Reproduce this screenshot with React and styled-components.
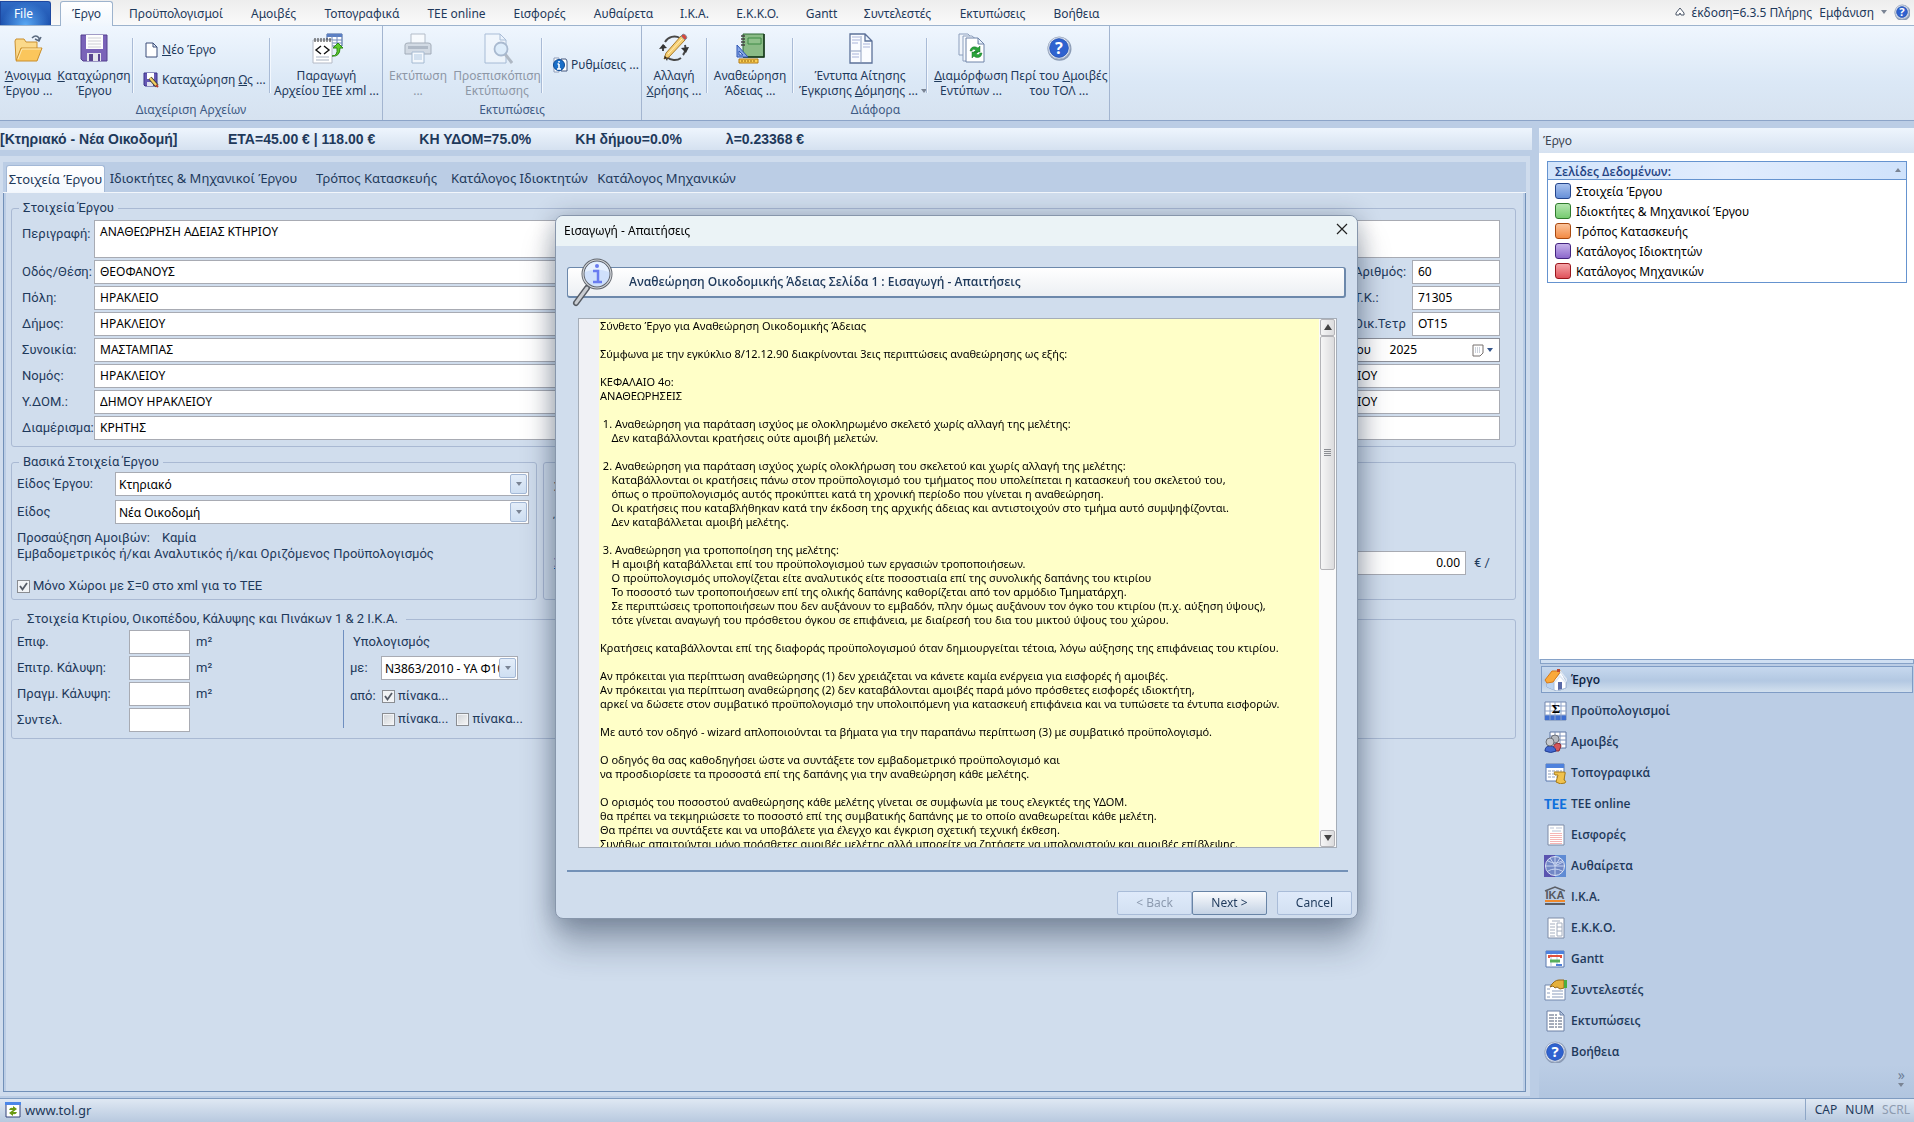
import React from "react";
import styled, { createGlobalStyle } from "styled-components";

const GlobalStyle = createGlobalStyle`
  * { box-sizing: border-box; }
  body {
    margin: 0;
    background: #bbcde5;
    color: #1e395b;
    font-family: "Noto Sans", "Open Sans", sans-serif;
    font-size: 12px;
  }
  button, input, select, textarea { font: inherit; color: inherit; margin: 0; }
  button { border: 0; background: none; padding: 0; }
  fieldset { margin: 0; min-width: 0; }
`;

const Window = styled.div`
  display: flex;
  flex-direction: column;
  min-height: 100vh;
`;

/* ---------- ribbon ---------- */

const TabBar = styled.nav`
  display: flex;
  height: 26px;
  padding-top: 1px;
  background: linear-gradient(#ededed, #fafafa);
  border-bottom: 1px solid #9db3cd;
`;

const FileButton = styled.button`
  width: 51px;
  margin-right: 9px;
  padding-right: 4px;
  color: #fff;
  border: 1px solid #1e48a0;
  border-bottom: 0;
  border-radius: 0 3px 0 0;
  background: radial-gradient(ellipse at bottom, #5aa9f5, transparent 70%), linear-gradient(#2f6ac4, #1d52ae);
`;

const RibbonTab = styled.button`
  width: ${(p) => p.$w}px;
  height: 25px;
  line-height: 22px;
  white-space: nowrap;
  ${(p) => p.$active && `
    margin-right: 2px;
    background: linear-gradient(#fff, #f0f6fd);
    border: 1px solid #9db3cd;
    border-bottom: 0;
    border-radius: 3px 3px 0 0;
  `}
`;

const TabTools = styled.div`
  display: flex;
  align-items: center;
  gap: 7px;
  margin-left: auto;
  padding: 0 4px 2px 0;
  white-space: nowrap;
`;

const Ribbon = styled.div`
  display: flex;
  height: 95px;
  background: linear-gradient(#eff6fe, #dbe8f6 60%, #d6e2f0);
  border-bottom: 1px solid #8ca4c8;
`;

const Group = styled.section`
  display: flex;
  flex-direction: column;
  width: ${(p) => p.$w}px;
  padding-top: 6px;
  border-right: 1px solid #a3b5d0;
`;

const GroupTools = styled.div`
  display: flex;
  flex: 1;
`;

const GroupName = styled.div`
  height: 18px;
  line-height: 16px;
  text-align: center;
  color: #3e5a84;
`;

const Divider = styled.i`
  width: 2px;
  height: 55px;
  margin-top: 6px;
  background: linear-gradient(90deg, #a9bbd6 50%, #f3f8fe 50%);
`;

const BigButton = styled.button`
  display: flex;
  flex-direction: column;
  align-items: center;
  width: ${(p) => p.$w}px;
  line-height: 15px;
  white-space: nowrap;
  color: ${(p) => (p.disabled ? "#8d97a6" : "#1e395b")};
  svg { margin-bottom: 4px; flex: none; opacity: ${(p) => (p.disabled ? 0.6 : 1)}; }
`;

const SmallStack = styled.div`
  display: flex;
  flex-direction: column;
  width: ${(p) => p.$w}px;
  padding: ${(p) => p.$top}px 0 0 9px;
  gap: 13px;
`;

const SmallButton = styled.button`
  display: flex;
  align-items: center;
  gap: 3px;
  height: 17px;
  white-space: nowrap;
`;

const Caret = styled.i`
  width: 0;
  height: 0;
  border: 3px solid transparent;
  border-top: 4px solid ${(p) => p.$color || "#7a8494"};
  border-bottom: 0;
  ${(p) => p.$up && "transform: rotate(180deg);"}
`;

const WithCaret = styled.span`
  display: flex;
  align-items: center;
  gap: 3px;
  margin-right: -6px;
`;

/* ---------- work area ---------- */

const Body = styled.div`
  display: flex;
  flex: 1;
  gap: 7px;
  padding-top: 7px;
`;

const Main = styled.main`
  display: flex;
  flex-direction: column;
  flex: 1;
  min-width: 0;
`;

const InfoBar = styled.div`
  display: flex;
  gap: 44px;
  height: 22px;
  font: bold 14px/22px "Liberation Sans", sans-serif;
  white-space: nowrap;
  background: linear-gradient(#eef5fd, #d5e1f0);
  span:first-child { min-width: 184px; }
`;

const Panel = styled.div`
  display: flex;
  flex-direction: column;
  flex: 1;
  margin: 6px 2px 2px 0;
  padding: 6px 4px 4px 3px;
  background: #cfdced;
`;

const PageTabs = styled.div`
  display: flex;
  height: 31px;
  padding: 3px 0 0 3px;
  background: #bbcde5;
  border-bottom: 1px solid #f2f6fb;
`;

const PageTab = styled.button`
  width: ${(p) => p.$w}px;
  height: 27px;
  padding-bottom: 1px;
  font-size: 13px;
  white-space: nowrap;
  ${(p) => p.$active && `
    background: linear-gradient(#fff, #f3f8fe);
    border: 1px solid #a3b8d6;
    border-bottom: 0;
    border-radius: 3px 3px 0 0;
  `}
`;

const Page = styled.form`
  display: flex;
  flex-direction: column;
  flex: 1;
  padding: 7px 9px 7px 7px;
  gap: 7px;
  font: 13px/16px Roboto, "Liberation Sans", sans-serif;
  background: #d0dded;
  border: 1px solid #7190b8;
  border-top: 0;
  box-shadow: inset 2px 0 #bbcde5, inset -2px 0 #bbcde5;
`;

const Fieldset = styled.fieldset`
  position: relative;
  border: 1px solid #a9b9d3;
  border-radius: 3px;
  padding: ${(p) => p.$pad};
`;

const Legend = styled.legend`
  margin-left: 2px;
  padding: 0 ${(p) => p.$gap || 4}px;
  line-height: 16px;
`;

const Columns = styled.div`
  display: flex;
  gap: 6px;
`;

const Stack = styled.div`
  display: flex;
  flex-direction: column;
  gap: ${(p) => p.$gap || 2}px;
  padding-left: ${(p) => p.$indent || 0}px;
`;

const Row = styled.div`
  display: flex;
  align-items: ${(p) => (p.$tall ? "flex-start" : "center")};
  min-height: 24px;
`;

const Label = styled.label`
  flex: none;
  width: ${(p) => (p.$w ? p.$w + "px" : "auto")};
  padding-left: ${(p) => p.$indent || 0}px;
  padding-top: ${(p) => (p.$tall ? 6 : 0)}px;
  white-space: nowrap;
`;

const Field = styled.input`
  flex: ${(p) => (p.$w ? "none" : 1)};
  width: ${(p) => (p.$w ? p.$w + "px" : "auto")};
  min-width: 0;
  height: 24px;
  padding: 0 5px 2px;
  font: 12px "Noto Sans", sans-serif;
  color: #000;
  background: #fff;
  border: 1px solid #a8abb3;
  text-align: ${(p) => p.$align || "left"};
`;

const Description = styled.textarea`
  display: block;
  flex: 1;
  height: 38px;
  padding: 3px 5px;
  font: 12px/16px "Noto Sans", sans-serif;
  color: #000;
  border: 1px solid #a8abb3;
  resize: none;
`;

const DateBox = styled.div`
  display: flex;
  align-items: center;
  gap: 3px;
  width: 200px;
  height: 24px;
  padding-right: 6px;
  background: #fff;
  border: 1px solid #8d9099;
  input { border: 0; height: 22px; }
`;

const SelectBox = styled.div`
  position: relative;
  width: ${(p) => (p.$w ? p.$w + "px" : "auto")};
  flex: ${(p) => (p.$w ? "none" : 1)};
  select {
    appearance: none;
    display: block;
    width: 100%;
    height: 24px;
    padding: 0 18px 0 3px;
    font: 12px "Noto Sans", sans-serif;
    color: #000;
    background: #fff;
    border: 1px solid #a8abb3;
    border-radius: 0;
  }
  span {
    position: absolute;
    top: 2px;
    right: 2px;
    display: flex;
    align-items: center;
    justify-content: center;
    width: 17px;
    height: 20px;
    background: linear-gradient(#e3edf9, #cfdff2);
    border: 1px solid #a3b8d6;
    border-radius: 2px;
    pointer-events: none;
  }
`;

const Check = styled.label`
  display: flex;
  align-items: center;
  gap: 3px;
  white-space: nowrap;
  input {
    appearance: none;
    width: 13px;
    height: 13px;
    border: 1px solid #8a8d92;
    outline: 1px solid #f2f4f7;
    outline-offset: -2px;
    background: linear-gradient(135deg, #cfd3d8, #f6f6f6);
  }
  input:checked {
    background: #f1f3f5 url("data:image/svg+xml,%3Csvg xmlns='http://www.w3.org/2000/svg' viewBox='0 0 11 11'%3E%3Cpath d='M2 5l2.500 3.500L9 2' fill='none' stroke='%23555b66' stroke-width='1.800'/%3E%3C/svg%3E");
  }
`;

const BasicBox = styled.div`
  width: 512px;
`;

const Notes = styled.div`
  margin: 6px 0 16px;
  white-space: nowrap;
  span { margin-right: 12px; }
`;

const CostSet = styled(Fieldset)`
  flex: 1;
  display: flex;
  flex-direction: column;
  gap: 20px;
`;

const Spacer = styled.div`
  flex: 1;
`;

const Building = styled(Fieldset)`
  margin-top: 4px;
`;

const Unit = styled.span`
  width: 22px;
  padding-left: 6px;
`;

const PlainLink = styled.a`
  color: #0a5fc4;
`;

const Calculation = styled.div`
  margin-left: 125px;
  padding-left: 6px;
  border-left: 1px solid #6f8fc0;
  height: 98px;
  display: grid;
  grid-template-columns: 31px auto;
  grid-template-rows: 24px 28px 28px 18px;
  align-items: center;
`;

const Heading = styled.span`
  grid-column: 1 / 3;
  padding-left: 3px;
`;

const CheckPair = styled.div`
  grid-column: 2;
  display: flex;
  gap: 8px;
  padding-left: 1px;
`;

/* ---------- right side ---------- */

const Side = styled.aside`
  display: flex;
  flex-direction: column;
  width: 375px;
`;

const SideTitle = styled.div`
  height: 25px;
  padding-left: 4px;
  line-height: 25px;
  color: #3c4450;
  background: linear-gradient(#eef5fd, #d5e1f0);
`;

const SideBody = styled.div`
  flex: 1;
  padding: 8px 7px 0 8px;
  background: #fff;
`;

const PagesBox = styled.section`
  padding-bottom: 1px;
  border: 1px solid #6593cf;
`;

const PagesTitle = styled.h2`
  display: flex;
  justify-content: space-between;
  margin: 0 0 1px;
  padding: 0 5px 0 7px;
  height: 18px;
  font: 600 12px/20px "Open Sans", "Noto Sans", sans-serif;
  color: #1f4283;
  background: linear-gradient(90deg, #d3e5fb, #e1ecfd 50%, #cfe2fb);
  border-bottom: 1px solid #6593cf;
  i { margin-top: 6px; }
`;

const PageLink = styled.a`
  display: flex;
  align-items: center;
  gap: 5px;
  height: 20px;
  padding-left: 7px;
  color: #000;
  text-decoration: none;
`;

const Swatch = styled.i`
  width: 16px;
  height: 16px;
  border: 1px solid ${(p) => p.$line};
  border-radius: 3px;
  background: linear-gradient(${(p) => p.$from}, ${(p) => p.$to});
`;

const Splitter = styled.div`
  height: 5px;
  margin: 0 0 2px 1px;
  background: #cfdff2;
  border: 1px solid #86a2c8;
`;

const NavList = styled.nav`
  display: flex;
  flex-direction: column;
  gap: 4px;
  padding: 0 1px 0 2px;
`;

const NavItem = styled.a`
  display: flex;
  align-items: center;
  gap: 4px;
  height: 27px;
  padding-left: 2px;
  font-family: "Open Sans", "Noto Sans", sans-serif;
  font-weight: 600;
  text-decoration: none;
  color: ${(p) => (p.$active ? "#0c2240" : "#1e395b")};
  border: 1px solid ${(p) => (p.$active ? "#7f9cc5" : "transparent")};
  background: ${(p) => (p.$active ? "linear-gradient(#c6d8ee, #b3c8e2 55%, #d2e0ee)" : "none")};
`;

const NavMore = styled.div`
  display: flex;
  flex-direction: column;
  align-items: flex-end;
  height: 33px;
  padding: 4px 9px 0 0;
  line-height: 12px;
  font-size: 14px;
  color: #6e7f98;
  background: linear-gradient(#bbcde5, #b1c5df);
  i { margin: 2px 1px 0 0; }
`;

const StatusBar = styled.footer`
  display: flex;
  align-items: center;
  height: 24px;
  padding: 0 4px 2px 5px;
  font-size: 13px;
  border-top: 1px solid #7f9bc0;
  background: linear-gradient(#dfe8f3, #b8c9df);
  a { display: flex; align-items: center; gap: 4px; color: inherit; text-decoration: none; }
`;

const Keys = styled.div`
  display: flex;
  gap: 8px;
  margin-left: auto;
  padding-left: 9px;
  height: 21px;
  font-size: 12px;
  line-height: 22px;
  border-left: 1px solid #8ea6c6;
  span:last-child { color: #8d9bb0; }
`;

/* ---------- wizard ---------- */

const Overlay = styled.div`
  position: fixed;
  inset: 0;
  display: flex;
  align-items: center;
  justify-content: center;
  padding: 11px 1px 0 0;
`;

const Dialog = styled.div`
  width: 803px;
  background: #d0dded;
  border: 1px solid #8796ab;
  border-radius: 8px;
  overflow: hidden;
  box-shadow: 0 26px 34px rgba(20, 35, 60, 0.32), 0 2px 24px rgba(20, 35, 60, 0.3);
`;

const DialogTitle = styled.header`
  display: flex;
  align-items: center;
  justify-content: space-between;
  height: 30px;
  padding: 0 9px 0 8px;
  color: #000;
  background: #ebf3f6;
`;

const Banner = styled.div`
  display: flex;
  align-items: center;
  height: 31px;
  margin: 21px 11px 20px 11px;
  font-family: "Open Sans", "Noto Sans", sans-serif;
  font-weight: 600;
  background: linear-gradient(#fff, #eceff3);
  border: 1px solid #6c88ab;
  border-width: 1px 2px 2px 1px;
  border-radius: 3px;
  svg { flex: none; margin: 0 15px 0 4px; overflow: visible; }
`;

const Reader = styled.div`
  display: flex;
  height: 530px;
  margin: 0 20px 0 22px;
  background: #f0f1f5;
  border: 1px solid #a5adb8;
  padding-left: 20px;
`;

const ReaderText = styled.textarea`
  flex: 1;
  padding: 0 1px;
  border: 0;
  resize: none;
  overflow: hidden;
  white-space: pre;
  font-size: 11px;
  line-height: 14px;
  color: #000;
  background: #ffffc8;
`;

const Scrollbar = styled.div`
  display: flex;
  flex-direction: column;
  width: 17px;
  background: #fbfbfb;
  padding: 0 1px;
`;

const ScrollArrow = styled.button`
  display: flex;
  align-items: center;
  justify-content: center;
  height: 17px;
  margin-top: ${(p) => (p.$down ? "auto" : 0)};
  background: linear-gradient(90deg, #f6f6f6, #dcdcde);
  border: 1px solid #b4b4b8;
  border-radius: 2px;
  i { border-width: 4px; border-bottom: 0; border-top: 6px solid #444; }
`;

const ScrollThumb = styled.div`
  display: flex;
  align-items: center;
  justify-content: center;
  height: 234px;
  background: linear-gradient(90deg, #f6f6f6, #dcdcde);
  border: 1px solid #b4b4b8;
  border-radius: 2px;
`;

const DialogFooter = styled.footer`
  display: flex;
  justify-content: flex-end;
  margin: 22px 9px 0 11px;
  padding: 19px 0 0;
  height: 48px;
  border-top: 2px solid #7391b7;
`;

const DialogButton = styled.button`
  width: 75px;
  height: 24px;
  margin-left: ${(p) => p.$gap || 0}px;
  margin-right: ${(p) => (p.$last ? -4 : 0)}px;
  font-size: 12px;
  color: ${(p) => (p.disabled ? "#8d9bb0" : "#1e395b")};
  border: 1px solid ${(p) => (p.$main ? "#6884a6" : "#a9bcd8")};
  border-radius: 2px;
  background: ${(p) => (p.$main ? "linear-gradient(#fbfcfe, #c4d2e4)" : "linear-gradient(#dfeafa, #d2e0f2)")};
`;

/* ---------- drawings ---------- */

const HelpMark = ({ r = 13, c = 16 }) => (
  <>
    <circle cx={c + 0.5} cy={c + 0.8} r={r - 1} fill="#8b9bb5" />
    <circle cx={c} cy={c} r={r - 2} fill="#f4f7fc" stroke="#a7b4ca" />
    <circle cx={c} cy={c} r={r - 3.5} fill="#2f62cf" stroke="#1f479f" strokeWidth=".6" />
    <text x={c} y={c + r * 0.45} fontSize={r * 1.25} fontWeight="bold" textAnchor="middle" fill="#fff" fontFamily="Noto Sans">?</text>
  </>
);

const bigIcons = {
  open: (
    <>
      <path d="M3 9l1-2h8l2 3h11v18H4z" fill="#fbd98a" stroke="#c98f2e" />
      <path d="M4 29l5-13h21l-5 13z" fill="#fbc65c" stroke="#c98f2e" />
      <path d="M6 27l4-10h19" fill="none" stroke="#fde9b4" />
      <path d="M20 6q4-4 7 0v3m2-4l-2 4-4-2" fill="none" stroke="#5b6b80" strokeWidth="1.500" />
    </>
  ),
  save: (
    <>
      <path d="M3 3h26v26H5l-2-2z" fill="#7a63b8" stroke="#54418f" />
      <path d="M8 3h17v14H8z" fill="#fdfdfd" />
      <path d="M10 6h13M10 9h13M10 12h13M10 15h13" stroke="#cfcfd6" />
      <path d="M9 21h14v8H9z" fill="#e4e4ec" />
      <path d="M11 22h4v7h-4zM20 22h2v7h-2z" fill="#58448f" />
    </>
  ),
  xml: (
    <>
      <path d="M16 2h15v12H16z" fill="#fff" stroke="#3d5c96" />
      <path d="M16 2h15v3H16z" fill="#5a7fc4" />
      <path d="M16 8h15M16 11h15M21 3v11M26 3v11" stroke="#6c86b8" />
      <path d="M2 8h19v23H2z" fill="#fff" stroke="#b4bac6" />
      <path d="M4 6v4M7 6v4M10 6v4M13 6v4M16 6v4M19 6v4" stroke="#333" />
      <path d="M10 14l-5 4 5 4M13 14l5 4-5 4" fill="none" stroke="#111" strokeWidth="1.400" />
      <path d="M5 25h13M5 28h13" stroke="#a9b3c2" />
      <path d="M21 24q6 0 5-8h-4l5-5 5 5h-3q0 9-8 8z" fill="#5fcb2c" stroke="#2c8a14" />
    </>
  ),
  print: (
    <>
      <path d="M9 2h14v12H9z" fill="#fff" stroke="#8f99a6" />
      <path d="M3 13q0-2 3-2h20q3 0 3 2v9H3z" fill="#c5ccd5" stroke="#77818f" />
      <path d="M6 14h20v3H6z" fill="#8c96a5" />
      <path d="M10 20h12v11H10z" fill="#fff" stroke="#7d98b8" />
      <path d="M12 23h8M12 25h8M12 27h8" stroke="#8fb0d4" />
    </>
  ),
  preview: (
    <>
      <path d="M4 2h15l6 6v23H4z M19 2v6h6" fill="#f4f8fd" stroke="#7f9abf" />
      <path d="M24 22l7 9" stroke="#8e96a2" strokeWidth="3" />
      <circle cx="20" cy="17" r="6.500" fill="#d8ebfb" stroke="#8096b4" strokeWidth="1.800" />
    </>
  ),
  change: (
    <>
      <path d="M7 10a11 11 0 0 1 15-4M27 13a11 11 0 0 1-2 10M23 26a11 11 0 0 1-14-1M5 19a11 11 0 0 1 1-6" fill="none" stroke="#484848" strokeWidth="2" />
      <path d="M1 17l4-5 4 4zM31 15l-3 6-5-5zM11 23l-2 6-3-5z" fill="#333" />
      <path d="M6 27l2-6L23 4l4 4-16 17z" fill="#f6cf74" stroke="#a87b2c" />
      <path d="M10 22L24 7" stroke="#fff0bd" />
      <path d="M23 4l2-2q3 0 4 4l-2 2z" fill="#d6483e" stroke="#8c8c96" />
      <path d="M6 27l1-3 2 2z" fill="#222" />
    </>
  ),
  review: (
    <>
      <path d="M9 2h21v23H9z" fill="#8abb86" stroke="#2f6b35" />
      <path d="M30 2v23H9" fill="none" stroke="#16361b" strokeWidth="1.500" />
      <path d="M14 6h13v6H14z" fill="#8fc08b" stroke="#3c8a44" />
      <path d="M7 4h4M7 7h4M7 10h4M7 13h4" stroke="#444" strokeWidth="1.500" />
      <path d="M3 13l11 12H3z" fill="#86a7e6" stroke="#2c55b4" />
      <path d="M5 19l4 4H5z" fill="#dce8fc" stroke="#2c55b4" />
      <path d="M5 27h19v4H5z" fill="#fbcf55" stroke="#b47a12" />
      <path d="M8 28v2M11 28v2M14 28v2M17 28v2M20 28v2" stroke="#94620a" />
    </>
  ),
  forms: (
    <>
      <path d="M6 2h15l7 7v22H6z M21 2v7h7" fill="#fafcff" stroke="#5c7199" strokeWidth="1.300" />
      <path d="M17 4v26M7 19h10" stroke="#8e9fc0" />
      <path d="M8 5h8M8 8h8M8 11h6M8 22h7M8 25h7M19 12h7M19 15h7" stroke="#a9b4da" />
    </>
  ),
  layouts: (
    <>
      <path d="M4 2h9l5 5v16H4z" fill="#f1f5fb" stroke="#8c9fbd" />
      <path d="M8 4h9l6 5v20H8z" fill="#f5f8fd" stroke="#8c9fbd" />
      <path d="M11 6h12l6 6v18H11z M23 6v6h6" fill="#fff" stroke="#6f84a8" />
      <path d="M15 19q1-5 6-4l2 1 2-2v6h-6l2-2q-4-2-4 1zM27 21q-1 6-7 4l-1-1-2 2v-6h6l-2 2q3 2 4-1z" fill="#2aa53b" stroke="#14742a" strokeWidth=".5" />
    </>
  ),
  about: <HelpMark />,
};

const smallIcons = {
  page: <path d="M3 1h7l4 4v10H3z M10 1v4h4" fill="#fff" stroke="#3a4d78" />,
  saveAs: (
    <>
      <path d="M1 1h13v13H2l-1-1z" fill="#6558b4" stroke="#3b3288" />
      <path d="M4 1h7v6H4z" fill="#fff" />
      <path d="M4 10h6v4H4z" fill="#dfe0ee" />
      <path d="M7 6l7 8" stroke="#3d3a30" strokeWidth="4" />
      <path d="M7 6l7 8" stroke="#f1cf62" strokeWidth="2.400" />
      <path d="M13 13l2 2" stroke="#b73a2c" strokeWidth="2" />
    </>
  ),
  info: (
    <>
      <path d="M2 1h5v14H2z" fill="#fff" stroke="#8c9bb8" />
      <path d="M9 2h5l1 2v10H9z" fill="#fff" stroke="#44597f" />
      <circle cx="7" cy="8" r="5.500" fill="#1a6fc8" stroke="#0e4a94" />
      <path d="M7 7v5M5.500 7H7M5 12h4M7 4v1.600" stroke="#fff" strokeWidth="1.600" />
    </>
  ),
  site: (
    <>
      <path d="M1 1h14v14H1z" fill="#fff" stroke="#33437a" />
      <path d="M0 0h16v3H0z" fill="#4b86e8" />
      <path d="M4 8q1-3 4-2V4l4 3-4 3V8H4zM12 10q-1 3-4 2v2l-4-3 4-3v2h4z" fill="#6a9a12" />
    </>
  ),
};

const navIcons = {
  home: (
    <>
      <path d="M3 12l10-8 9 9v6l-9 3-10-4z" fill="#e4eefa" stroke="#8aa4c8" />
      <path d="M3 12v6l7 3V11z" fill="#bcd3ef" />
      <path d="M10 11l7-8 5 9v7l-9 3-3-1z" fill="#fff" stroke="#a9bdd8" />
      <path d="M1 11L8 2l9 0-8 11-6 1z" fill="#fba93a" stroke="#d77a16" />
      <path d="M16 2l7 9-2 2-5-6-5 6" fill="none" stroke="#dfe8f4" strokeWidth="1.500" />
      <path d="M14 13h4v7l-4 1z" fill="#5a6ba8" />
      <path d="M13 0h3v3h-3z" fill="#c24a2e" />
    </>
  ),
  sum: (
    <>
      <path d="M1 2h21v18H1z" fill="#fff" stroke="#7085ad" />
      <path d="M1 15h21v5H1z" fill="#3f6fd0" />
      <path d="M6 2v18M11 2v18M17 2v18M1 6h21M1 11h21M1 15h21" stroke="#8fa3c9" />
      <text x="12" y="13" fontSize="13" fontWeight="bold" textAnchor="middle" fill="#000" fontFamily="Liberation Serif">Σ</text>
    </>
  ),
  people: (
    <>
      <path d="M6 1h16v16H6z" fill="#fff" stroke="#5f77a2" />
      <path d="M11 1v15M16 1v15M6 5h16M6 9h16M6 13h16" stroke="#7c92ba" />
      <path d="M9 20q0-7 4-8 4 0 4 3l-2 5z" fill="#d4575a" stroke="#8f2b30" />
      <circle cx="11" cy="8" r="4" fill="#b5b9bf" stroke="#6b6f76" />
      <path d="M1 20q0-5 5-5t6 5q-5 3-11 0z" fill="#4468cf" stroke="#223f94" />
      <circle cx="6" cy="11" r="4" fill="#c6c9ce" stroke="#6b6f76" />
    </>
  ),
  topo: (
    <>
      <path d="M2 2h18v17H2z" fill="#fff" stroke="#5b78ae" />
      <path d="M2 2h18v4H2z" fill="#4e81dc" />
      <path d="M4 9h14M4 12h14M4 15h10" stroke="#8b9dbd" strokeDasharray="3 1" />
      <path d="M12 10q-3-1-1 3l3 0-2 7q4 3 9 1 2-2-1-3l1-6q1-2-1-2z" fill="#f0c24e" stroke="#a67a18" />
    </>
  ),
  tee: <text x="0" y="16" fontSize="13" fontWeight="900" fill="#0f6fdc" fontFamily="Lato">TEE</text>,
  fees: (
    <>
      <path d="M4 1h16v20H4z" fill="#fff" stroke="#7d8ba6" />
      <path d="M6 4h4M12 4h6M8 7h9" stroke="#b9c3d6" />
      <path d="M6 9.500h12M6 11.500h12M6 13.500h12M6 15.500h12M6 17.500h12M6 19.500h12" stroke="#f5b5b5" />
    </>
  ),
  globe: (
    <>
      <path d="M0 0h22v22H0z" fill="#5f8bd4" />
      <path d="M0 0h11v22H0z" fill="#5a54b0" />
      <circle cx="11" cy="11" r="9.500" fill="#7288c6" stroke="#dfe6f5" />
      <path d="M11 2v18M2 11h18M4 6q7 4 14 0M4 16q7-4 14 0M11 11L6 3M11 11l5-8M11 11l8-4" fill="none" stroke="#c9d5f0" />
    </>
  ),
  ika: (
    <>
      <path d="M1 5L11 1l10 4" fill="none" stroke="#5c5f66" strokeWidth="1.500" />
      <text x="11" y="13" fontSize="11" fontWeight="bold" textAnchor="middle" fill="#55585e" fontFamily="Liberation Sans">IKA</text>
      <path d="M1 15h20" stroke="#f08a2c" strokeWidth="2" />
      <path d="M1 18h20" stroke="#5c5f66" strokeWidth="2" />
    </>
  ),
  ekko: (
    <>
      <path d="M4 1h16v20H4z" fill="#fff" stroke="#7d8ba6" />
      <path d="M8 4h8M6 7h5M6 10h5M6 13h5M6 16h5M6 19h5M13 6h5v13h-5zM13 10h5M13 14h5" fill="none" stroke="#a4aebf" />
    </>
  ),
  gantt: (
    <>
      <path d="M2 3h18v16H2z" fill="#fff" stroke="#5b78ae" />
      <path d="M2 3h18v3H2z" fill="#4e81dc" />
      <path d="M7 6v13M13 6v13" stroke="#b9c6dd" />
      <path d="M5 10V8h12v2" fill="none" stroke="#e0513d" strokeWidth="2" />
      <path d="M6 13h10" stroke="#58b05c" strokeWidth="3" />
      <path d="M12 17h6" stroke="#4f7ed6" strokeWidth="2" />
    </>
  ),
  rates: (
    <>
      <path d="M1 6h20v15H1z" fill="#fff" stroke="#7388ad" />
      <path d="M3 10h3M3 14h3M3 18h3M8 12h11M8 15h11M8 18h11" stroke="#8b9dbd" />
      <path d="M6 8q4-7 9-7h5v8l-4 1-3-2-2 1-2-2z" fill="#e5b13a" stroke="#94691a" />
      <path d="M20 1h3v8h-3z" fill="#4cae3f" />
    </>
  ),
  prints: (
    <>
      <path d="M3 1h13l4 4v16H3z M16 1v4h4" fill="#fff" stroke="#6d80a5" />
      <path d="M5 5h8M5 8h13M5 11h13M5 14h13M5 17h13" stroke="#4d5b76" strokeDasharray="5 1 2 1" />
    </>
  ),
  help: <HelpMark r={12} c={11} />,
};

const Big = ({ name }) => <svg width="32" height="32" viewBox="0 0 32 32" aria-hidden="true">{bigIcons[name]}</svg>;
const Small = ({ name }) => <svg width="16" height="16" viewBox="0 0 16 16" aria-hidden="true">{smallIcons[name]}</svg>;
const Nav = ({ name }) => <svg width="23" height="22" viewBox="0 0 23 22" aria-hidden="true">{navIcons[name]}</svg>;

/* ---------- data ---------- */

const ribbonTabs = [
  ["Προϋπολογισμοί", 122], ["Αμοιβές", 73], ["Τοπογραφικά", 104], ["TEE online", 85],
  ["Εισφορές", 81], ["Αυθαίρετα", 87], ["Ι.Κ.Α.", 55], ["Ε.Κ.Κ.Ο.", 71], ["Gantt", 57],
  ["Συντελεστές", 95], ["Εκτυπώσεις", 95], ["Βοήθεια", 73],
];

const pageTabs = [
  ["Στοιχεία Έργου", 99], ["Ιδιοκτήτες & Μηχανικοί Έργου", 197], ["Τρόπος Κατασκευής", 149],
  ["Κατάλογος Ιδιοκτητών", 131], ["Κατάλογος Μηχανικών", 169],
];

const dataPages = [
  ["Στοιχεία Έργου", "#24458c", "#a9c2ee", "#6790d8"],
  ["Ιδιοκτήτες & Μηχανικοί Έργου", "#2f7a2c", "#b5e6b0", "#76cb70"],
  ["Τρόπος Κατασκευής", "#a8480f", "#fbc49c", "#f38a44"],
  ["Κατάλογος Ιδιοκτητών", "#43237f", "#c6b2ea", "#8c68cc"],
  ["Κατάλογος Μηχανικών", "#99161c", "#f5a5a8", "#e0525a"],
];

const navItems = [
  ["Έργο", "home"], ["Προϋπολογισμοί", "sum"], ["Αμοιβές", "people"], ["Τοπογραφικά", "topo"],
  ["TEE online", "tee"], ["Εισφορές", "fees"], ["Αυθαίρετα", "globe"], ["Ι.Κ.Α.", "ika"],
  ["Ε.Κ.Κ.Ο.", "ekko"], ["Gantt", "gantt"], ["Συντελεστές", "rates"], ["Εκτυπώσεις", "prints"],
  ["Βοήθεια", "help"],
];

const guide = `Σύνθετο Έργο για Αναθεώρηση Οικοδομικής Άδειας

Σύμφωνα με την εγκύκλιο 8/12.12.90 διακρίνονται 3εις περιπτώσεις αναθεώρησης ως εξής:

ΚΕΦΑΛΑΙΟ 4ο:
ΑΝΑΘΕΩΡΗΣΕΙΣ

 1. Αναθεώρηση για παράταση ισχύος με ολοκληρωμένο σκελετό χωρίς αλλαγή της μελέτης:
    Δεν καταβάλλονται κρατήσεις ούτε αμοιβή μελετών.

 2. Αναθεώρηση για παράταση ισχύος χωρίς ολοκλήρωση του σκελετού και χωρίς αλλαγή της μελέτης:
    Καταβάλλονται οι κρατήσεις πάνω στον προϋπολογισμό του τμήματος που υπολείπεται η κατασκευή του σκελετού του,
    όπως ο προϋπολογισμός αυτός προκύπτει κατά τη χρονική περίοδο που γίνεται η αναθεώρηση.
    Οι κρατήσεις που καταβλήθηκαν κατά την έκδοση της αρχικής άδειας και αντιστοιχούν στο τμήμα αυτό συμψηφίζονται.
    Δεν καταβάλλεται αμοιβή μελέτης.

 3. Αναθεώρηση για τροποποίηση της μελέτης:
    Η αμοιβή καταβάλλεται επί του προϋπολογισμού των εργασιών τροποποιήσεων.
    Ο προϋπολογισμός υπολογίζεται είτε αναλυτικός είτε ποσοστιαία επί της συνολικής δαπάνης του κτιρίου
    Το ποσοστό των τροποποιήσεων επί της ολικής δαπάνης καθορίζεται από τον αρμόδιο Τμηματάρχη.
    Σε περιπτώσεις τροποποιήσεων που δεν αυξάνουν το εμβαδόν, πλην όμως αυξάνουν τον όγκο του κτιρίου (π.χ. αύξηση ύψους),
    τότε γίνεται αναγωγή του πρόσθετου όγκου σε επιφάνεια, με διαίρεσή του δια του μικτού ύψους του χώρου.

Κρατήσεις καταβάλλονται επί της διαφοράς προϋπολογισμού όταν δημιουργείται τέτοια, λόγω αύξησης της επιφάνειας του κτιρίου.

Αν πρόκειται για περίπτωση αναθεώρησης (1) δεν χρειάζεται να κάνετε καμία ενέργεια για εισφορές ή αμοιβές.
Αν πρόκειται για περίπτωση αναθεώρησης (2) δεν καταβάλονται αμοιβές παρά μόνο πρόσθετες εισφορές ιδιοκτήτη,
αρκεί να δώσετε στον συμβατικό προϋπολογισμό την υπολοιπόμενη για κατασκευή επιφάνεια και να τυπώσετε τα έντυπα εισφορών.

Με αυτό τον οδηγό - wizard απλοποιούνται τα βήματα για την παραπάνω περίπτωση (3) με συμβατικό προϋπολογισμό.

Ο οδηγός θα σας καθοδηγήσει ώστε να συντάξετε τον εμβαδομετρικό προϋπολογισμό και
να προσδιορίσετε τα προσοστά επί της δαπάνης για την αναθεώρηση κάθε μελέτης.

Ο ορισμός του ποσοστού αναθεώρησης κάθε μελέτης γίνεται σε συμφωνία με τους ελεγκτές της ΥΔΟΜ.
θα πρέπει να τεκμηριώσετε το ποσοστό επί της συμβατικής δαπάνης με το οποίο αναθεωρείται κάθε μελέτη.
Θα πρέπει να συντάξετε και να υποβάλετε για έλεγχο και έγκριση σχετική τεχνική έκθεση.
Συνήθως απαιτούνται μόνο πρόσθετες αμοιβές μελέτης αλλά μπορείτε να ζητήσετε να υπολογιστούν και αμοιβές επίβλεψης.`;

/* ---------- parts ---------- */

function RibbonArea() {
  return (
    <>
      <TabBar>
        <FileButton>File</FileButton>
        <RibbonTab $w={53} $active>Έργο</RibbonTab>
        {ribbonTabs.map(([name, w]) => (
          <RibbonTab key={name} $w={w}>{name}</RibbonTab>
        ))}
        <TabTools>
          <svg width="10" height="10" viewBox="0 0 10 10" aria-hidden="true">
            <path d="M1 6l4-5 4 5v2H6L5 6 4 8H1z" fill="#fff" stroke="#4b5668" />
          </svg>
          <span>έκδοση=6.3.5 Πλήρης</span>
          <span>Εμφάνιση</span>
          <Caret />
          <svg width="16" height="16" viewBox="0 0 16 16" aria-hidden="true"><HelpMark r={9} c={8} /></svg>
        </TabTools>
      </TabBar>
      <Ribbon>
        <Group $w={383}>
          <GroupTools>
            <BigButton $w={56}><Big name="open" /><span><u>Ά</u>νοιγμα</span><span>Έργου ...</span></BigButton>
            <BigButton $w={76}><Big name="save" /><span><u>Κ</u>αταχώρηση</span><span>Έργου</span></BigButton>
            <Divider />
            <SmallStack $w={135} $top={9}>
              <SmallButton><Small name="page" /><span><u>Ν</u>έο Έργο</span></SmallButton>
              <SmallButton><Small name="saveAs" /><span>Καταχώρηση <u>Ω</u>ς ...</span></SmallButton>
            </SmallStack>
            <Divider />
            <BigButton $w={111}><Big name="xml" /><span>Παραγωγή</span><span>Αρχείου <u>T</u>EE xml ...</span></BigButton>
          </GroupTools>
          <GroupName>Διαχείριση Αρχείων</GroupName>
        </Group>
        <Group $w={259}>
          <GroupTools>
            <BigButton $w={70} disabled><Big name="print" /><span>Εκτύπωση</span><span>...</span></BigButton>
            <BigButton $w={88} disabled><Big name="preview" /><span>Προεπισκόπιση</span><span>Εκτύπωσης</span></BigButton>
            <Divider />
            <SmallStack $w={98} $top={24}>
              <SmallButton><Small name="info" /><span>Ρυθμίσεις ...</span></SmallButton>
            </SmallStack>
          </GroupTools>
          <GroupName>Εκτυπώσεις</GroupName>
        </Group>
        <Group $w={468}>
          <GroupTools>
            <BigButton $w={64}><Big name="change" /><span>Αλλαγή</span><span><u>Χ</u>ρήσης ...</span></BigButton>
            <Divider />
            <BigButton $w={84}><Big name="review" /><span>Αναθεώρηση</span><span>Άδειας ...</span></BigButton>
            <Divider />
            <BigButton $w={132}>
              <Big name="forms" />
              <span>Έντυπα Αίτησης</span>
              <WithCaret><span>Έγκρισης <u>Δ</u>όμησης ...</span><Caret /></WithCaret>
            </BigButton>
            <Divider />
            <BigButton $w={86}><Big name="layouts" /><span><u>Δ</u>ιαμόρφωση</span><span>Εντύπων ...</span></BigButton>
            <BigButton $w={90}><Big name="about" /><span>Περί του <u>Α</u>μοιβές</span><span>του ΤΟΛ ...</span></BigButton>
          </GroupTools>
          <GroupName>Διάφορα</GroupName>
        </Group>
      </Ribbon>
    </>
  );
}

function TextRow({ id, label, value, children }) {
  return (
    <Row>
      <Label $w={72} htmlFor={id}>{label}</Label>
      <Field id={id} defaultValue={value} />
      {children}
    </Row>
  );
}

function SideField({ id, label, value }) {
  return (
    <>
      <Label $w={72} $indent={14} htmlFor={id}>{label}</Label>
      <Field id={id} $w={88} defaultValue={value} />
    </>
  );
}

function Choice({ id, w, value }) {
  return (
    <SelectBox $w={w}>
      <select id={id}><option>{value}</option></select>
      <span><Caret /></span>
    </SelectBox>
  );
}

function ProjectForm() {
  return (
    <Page>
      <Fieldset $pad="4px 15px 6px 5px">
        <Legend>Στοιχεία Έργου</Legend>
        <Stack $indent={5}>
          <Row $tall>
            <Label $w={72} $tall htmlFor="descr">Περιγραφή:</Label>
            <Description id="descr" defaultValue="ΑΝΑΘΕΩΡΗΣΗ ΑΔΕΙΑΣ ΚΤΗΡΙΟΥ" />
          </Row>
          <TextRow id="street" label="Οδός/Θέση:" value="ΘΕΟΦΑΝΟΥΣ"><SideField id="num" label="Αριθμός:" value="60" /></TextRow>
          <TextRow id="city" label="Πόλη:" value="ΗΡΑΚΛΕΙΟ"><SideField id="zip" label="Τ.Κ.:" value="71305" /></TextRow>
          <TextRow id="town" label="Δήμος:" value="ΗΡΑΚΛΕΙΟΥ"><SideField id="block" label="Οικ.Τετρ" value="ΟΤ15" /></TextRow>
          <TextRow id="area" label="Συνοικία:" value="ΜΑΣΤΑΜΠΑΣ">
            <Label $w={80} htmlFor="date" />
            <DateBox>
              <Field id="date" defaultValue={"Ιανουαρίου\u00a0\u00a0\u00a0\u00a0\u00a0\u00a02025"} />
              <svg width="12" height="13" viewBox="0 0 12 13" aria-hidden="true">
                <path d="M1 1h10v8l-3 3H1z" fill="#fff" stroke="#77706e" />
                <path d="M3 4h6M3 6h6M3 8h6" stroke="#9aa6ba" strokeDasharray="1 1" />
              </svg>
              <Caret $color="#34558b" />
            </DateBox>
          </TextRow>
          <TextRow id="county" label="Νομός:" value="ΗΡΑΚΛΕΙΟΥ">
            <Label $w={80} htmlFor="county2" />
            <Field id="county2" $w={194} defaultValue="ΗΡΑΚΛΕΙΟΥ" />
          </TextRow>
          <TextRow id="ydom" label="Υ.ΔΟΜ.:" value="ΔΗΜΟΥ ΗΡΑΚΛΕΙΟΥ">
            <Label $w={80} htmlFor="ydom2" />
            <Field id="ydom2" $w={194} defaultValue="ΗΡΑΚΛΕΙΟΥ" />
          </TextRow>
          <TextRow id="flat" label="Διαμέρισμα:" value="ΚΡΗΤΗΣ" />
        </Stack>
      </Fieldset>

      <Columns>
        <Fieldset $pad="2px 7px 5px 5px">
          <Legend>Βασικά Στοιχεία Έργου</Legend>
          <BasicBox>
            <Stack $gap={4}>
              <Row><Label $w={98} htmlFor="kind">Είδος Έργου:</Label><Choice id="kind" value="Κτηριακό" /></Row>
              <Row><Label $w={98} htmlFor="type">Είδος</Label><Choice id="type" value="Νέα Οικοδομή" /></Row>
            </Stack>
            <Notes>
              <div><span>Προσαύξηση Αμοιβών:</span><span>Καμία</span></div>
              <div>Εμβαδομετρικός ή/και Αναλυτικός ή/και Οριζόμενος Προϋπολογισμός</div>
            </Notes>
            <Check><input type="checkbox" defaultChecked />Μόνο Χώροι με Σ=0 στο xml για το ΤΕΕ</Check>
          </BasicBox>
        </Fieldset>
        <CostSet $pad="9px 19px 4px 10px">
          <Legend>Συντελεστές</Legend>
          <span>Συντελεστές Έργου</span>
          <span>Έργο</span>
          <Row>
            <PlainLink href="#rates">Συντελεστής</PlainLink>
            <Spacer />
            <Field id="cost" aria-label="Κόστος" $w={140} $align="right" defaultValue="0.00" />
            <Label $w={30} $indent={8} htmlFor="cost">€ /</Label>
          </Row>
        </CostSet>
      </Columns>

      <Building $pad="3px 6px 6px 5px">
        <Legend $gap={8}>Στοιχεία Κτιρίου, Οικοπέδου, Κάλυψης και Πινάκων 1 &amp; 2 Ι.Κ.Α.</Legend>
        <Columns>
          <Stack>
            {[["Επιφ.", "m²"], ["Επιτρ. Κάλυψη:", "m²"], ["Πραγμ. Κάλυψη:", "m²"], ["Συντελ.", ""]].map(([name, unit]) => (
              <Row key={name}>
                <Label $w={112} htmlFor={name}>{name}</Label>
                <Field id={name} $w={61} />
                <Unit>{unit}</Unit>
              </Row>
            ))}
          </Stack>
          <Calculation>
            <Heading>Υπολογισμός</Heading>
            <Label htmlFor="law">με:</Label>
            <Choice id="law" w={137} value="Ν3863/2010 - ΥΑ Φ10" />
            <span>από:</span>
            <CheckPair><Check><input type="checkbox" defaultChecked />πίνακα...</Check></CheckPair>
            <CheckPair>
              <Check><input type="checkbox" />πίνακα...</Check>
              <Check><input type="checkbox" />πίνακα...</Check>
            </CheckPair>
          </Calculation>
        </Columns>
      </Building>
    </Page>
  );
}

function SidePanel() {
  return (
    <Side>
      <SideTitle>Έργο</SideTitle>
      <SideBody>
        <PagesBox>
          <PagesTitle>Σελίδες Δεδομένων:<Caret $up /></PagesTitle>
          {dataPages.map(([name, line, from, to]) => (
            <PageLink key={name} href="#page">
              <Swatch $line={line} $from={from} $to={to} />
              {name}
            </PageLink>
          ))}
        </PagesBox>
      </SideBody>
      <Splitter />
      <NavList>
        {navItems.map(([name, icon], i) => (
          <NavItem key={name} href="#nav" $active={i === 0}>
            <Nav name={icon} />
            {name}
          </NavItem>
        ))}
      </NavList>
      <NavMore>»<Caret /></NavMore>
    </Side>
  );
}

function Wizard() {
  return (
    <Overlay>
      <Dialog role="dialog" aria-label="Εισαγωγή - Απαιτήσεις">
        <DialogTitle>
          <span>Εισαγωγή - Απαιτήσεις</span>
          <button aria-label="Close">
            <svg width="12" height="12" viewBox="0 0 12 12" aria-hidden="true">
              <path d="M1 1l10 10M11 1L1 11" stroke="#222" strokeWidth="1.200" />
            </svg>
          </button>
        </DialogTitle>
        <Banner>
          <svg width="42" height="48" viewBox="0 0 42 48" aria-hidden="true">
            <path d="M15 30L4 45" stroke="#555a62" strokeWidth="6" strokeLinecap="round" />
            <path d="M15 30L4 45" stroke="#c9ccd1" strokeWidth="3" strokeLinecap="round" />
            <circle cx="25" cy="16" r="14" fill="#cfe0fb" stroke="#5f646c" strokeWidth="3" />
            <circle cx="25" cy="16" r="14" fill="none" stroke="#d6d9dd" strokeWidth="1.200" />
            <path d="M13 14q12-5 24 0-2-10-12-10t-12 10z" fill="#e6f0fe" />
            <circle cx="25" cy="8" r="2" fill="#6a7cf0" />
            <path d="M21 13h5v11M21 24h9" fill="none" stroke="#6a7cf0" strokeWidth="2.500" />
          </svg>
          Αναθεώρηση Οικοδομικής Άδειας Σελίδα 1 : Εισαγωγή - Απαιτήσεις
        </Banner>
        <Reader>
          <ReaderText readOnly aria-label="Οδηγίες" defaultValue={guide} />
          <Scrollbar>
            <ScrollArrow aria-label="Up"><Caret $up /></ScrollArrow>
            <ScrollThumb>
              <svg width="7" height="8" viewBox="0 0 7 8" aria-hidden="true">
                <path d="M0 .5h7M0 2.500h7M0 4.500h7M0 6.500h7" stroke="#8b8d92" />
              </svg>
            </ScrollThumb>
            <ScrollArrow $down aria-label="Down"><Caret /></ScrollArrow>
          </Scrollbar>
        </Reader>
        <DialogFooter>
          <DialogButton disabled>&lt; Back</DialogButton>
          <DialogButton $main>Next &gt;</DialogButton>
          <DialogButton $gap={10} $last>Cancel</DialogButton>
        </DialogFooter>
      </Dialog>
    </Overlay>
  );
}

export default function App() {
  return (
    <Window>
      <GlobalStyle />
      <RibbonArea />
      <Body>
        <Main>
          <InfoBar>
            <span>[Κτηριακό - Νέα Οικοδομή]</span>
            <span>ΕΤΑ=45.00 € | 118.00 €</span>
            <span>ΚΗ ΥΔΟΜ=75.0%</span>
            <span>ΚΗ δήμου=0.0%</span>
            <span>λ=0.23368 €</span>
          </InfoBar>
          <Panel>
            <PageTabs>
              {pageTabs.map(([name, w], i) => (
                <PageTab key={name} type="button" $w={w} $active={i === 0}>{name}</PageTab>
              ))}
            </PageTabs>
            <ProjectForm />
          </Panel>
        </Main>
        <SidePanel />
      </Body>
      <StatusBar>
        <a href="#site"><Small name="site" />www.tol.gr</a>
        <Keys><span>CAP</span><span>NUM</span><span>SCRL</span></Keys>
      </StatusBar>
      <Wizard />
    </Window>
  );
}
